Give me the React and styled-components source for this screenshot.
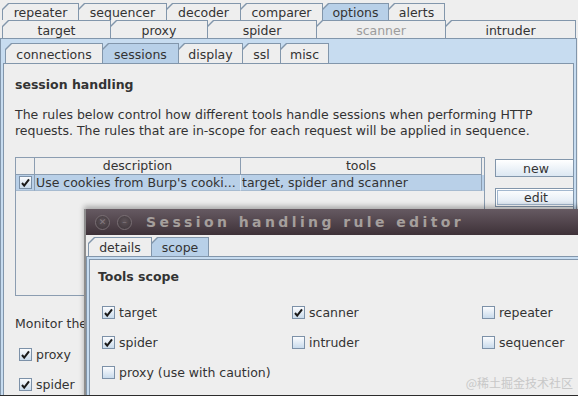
import styled, { createGlobalStyle } from "styled-components"

const GlobalStyle = createGlobalStyle`
  html, body {
    margin: 0;
    padding: 0;
    background: #eeeeee;
  }
  * {
    box-sizing: border-box;
  }
`

const Screen = styled.div`
  position: relative;
  width: 578px;
  height: 396px;
  overflow: hidden;
  background: #eeeeee;
  border-bottom: 1px solid #2c2c2c;
  font-family: "DejaVu Sans", "Noto Sans", sans-serif;
  font-size: 12.5px;
  color: #333333;
`

const TabRow = styled.div`
  display: flex;
  padding-left: ${(p) => p.$indent || 0}px;
  margin-top: ${(p) => p.$top || 0}px;
  height: ${(p) => p.$h}px;
`

const TabShape = styled.div`
  flex: none;
  width: ${(p) => p.$w}px;
  height: 100%;
  margin-right: -1px;
  padding: 1px 1px 0 1px;
  background: #8296ab;
  clip-path: polygon(6px 0, 100% 0, 100% 100%, 0 100%, 0 6px);
`

const TabFace = styled.div`
  height: 100%;
  display: flex;
  align-items: center;
  justify-content: center;
  padding-top: 1px;
  background: ${(p) => (p.$active ? "#b8d0e8" : "#eeeeee")};
  color: ${(p) => (p.$disabled ? "#9c9c9c" : "#333333")};
  clip-path: polygon(6px 0, 100% 0, 100% 100%, 0 100%, 0 6px);
  white-space: nowrap;
`

const Tab = ({ w, active, disabled, children }) => (
  <TabShape $w={w}>
    <TabFace $active={active} $disabled={disabled}>
      {children}
    </TabFace>
  </TabShape>
)

const OuterPane = styled.div`
  width: 577px;
  height: 370px;
  background: #c7dcf0;
  border: 1px solid #8296ab;
  border-bottom: none;
  padding: 4px 2px 0 2px;
`

const Panel = styled.div`
  height: 345px;
  background: #eeeeee;
  border: 1px solid #8296ab;
  padding: 0 0 0 11px;
  overflow: hidden;
`

const Heading = styled.div`
  margin-top: ${(p) => p.$top}px;
  font-weight: bold;
  line-height: 16px;
  color: #333333;
`

const Para = styled.p`
  margin: 14px 0 0;
  line-height: 16px;
  white-space: nowrap;
`

const TableRow = styled.div`
  display: flex;
  margin-top: 18px;
`

const ScrollPane = styled.div`
  width: 470px;
  height: 139px;
  border: 1px solid #8b9db1;
  flex: none;
`

const GridRow = styled.div`
  display: flex;
  height: ${(p) => p.$h}px;
  background: ${(p) => (p.$selected ? "#b9d0e8" : "#eeeeee")};
`

const HeadCell = styled.div`
  width: ${(p) => p.$w}px;
  border-right: 1px solid #8b9db1;
  border-bottom: 1px solid #8b9db1;
  display: flex;
  align-items: center;
  justify-content: center;
  line-height: 16px;
`

const BodyCell = styled.div`
  width: ${(p) => p.$w}px;
  border-right: 1px solid ${(p) => (p.$light ? "#dfe8f1" : "#8b9db1")};
  border-bottom: 1px solid #a7bbd0;
  display: flex;
  align-items: center;
  justify-content: ${(p) => (p.$center ? "center" : "flex-start")};
  padding-left: ${(p) => (p.$center ? 0 : 1)}px;
  white-space: nowrap;
  overflow: hidden;
`

const ButtonColumn = styled.div`
  display: flex;
  flex-direction: column;
  gap: 11px;
  margin-left: 10px;
  padding-top: 2px;
`

const Button = styled.div`
  width: 82px;
  height: ${(p) => (p.$focused ? 19 : 18)}px;
  display: flex;
  align-items: center;
  justify-content: center;
  border: 1px solid #8296ab;
  background: linear-gradient(#ffffff, #dce7f2);
  box-shadow: ${(p) => (p.$focused ? "inset 0 0 0 1px #ffffff, inset 0 0 0 2px #a3b8cf" : "none")};
  color: #333333;
`

const Text = styled.div`
  margin-top: ${(p) => p.$top}px;
  line-height: 16px;
`

const CheckRow = styled.div`
  display: flex;
  align-items: center;
  gap: 4px;
  height: 16px;
  margin-top: ${(p) => p.$top || 0}px;
  padding-left: ${(p) => p.$indent || 0}px;
  white-space: nowrap;
`

const Box = styled.span`
  flex: none;
  width: 13px;
  height: 13px;
  border: 1px solid #7c91a8;
  background: linear-gradient(#fbfcfe, #c9dbec);
  display: inline-flex;
  align-items: center;
  justify-content: center;
`

const CheckBox = ({ checked }) => (
  <Box>
    {checked && (
      <svg width="11" height="11" viewBox="0 0 11 11">
        <path d="M2 6 L4.2 8.6 L9 2.4" fill="none" stroke="#1a1a1a" strokeWidth="2" />
      </svg>
    )}
  </Box>
)

const Dialog = styled.div`
  position: absolute;
  left: 84px;
  top: 209px;
  width: 510px;
  height: 200px;
  background: #eeeeee;
  border-left: 2px solid #8e8e8e;
  box-shadow: 0 -3px 5px rgba(0, 0, 0, 0.28);
`

const TitleBar = styled.div`
  height: 26px;
  display: flex;
  align-items: center;
  padding-left: 9px;
  gap: 7px;
  background: linear-gradient(#665a62, #3e3138);
`

const WinButton = styled.span`
  width: 15px;
  height: 15px;
  border-radius: 50%;
  background: radial-gradient(circle at 50% 40%, #5e5459, #3b3237);
  border: 1px solid #786e73;
  display: inline-flex;
  align-items: center;
  justify-content: center;
  color: #847a80;
  font-size: 9px;
  line-height: 1;
`

const Title = styled.span`
  margin-left: 7px;
  font-weight: bold;
  font-size: 14px;
  letter-spacing: 3.4px;
  color: #a59f9c;
  white-space: nowrap;
`

const ScopePane = styled.div`
  height: 160px;
  border-top: 1px solid #8296ab;
  border-left: 1px solid #8296ab;
  background: #c7dcf0;
  padding: 2px 0 0 2px;
`

const ScopePanel = styled.div`
  height: 100%;
  background: #eeeeee;
  border-top: 1px solid #8296ab;
  border-left: 1px solid #8296ab;
  padding: 9px 0 0 8px;
`

const ScopeGrid = styled.div`
  display: grid;
  grid-template-columns: 190px 190px 120px;
  row-gap: 14px;
  margin-top: 19px;
  padding-left: 4px;
`

const Watermark = styled.div`
  position: absolute;
  right: 5px;
  bottom: 4px;
  font-family: "Noto Sans CJK SC", sans-serif;
  font-size: 12px;
  color: #c8c8c8;
  white-space: nowrap;
`

const scopeItems = [
  { label: "target", checked: true },
  { label: "scanner", checked: true },
  { label: "repeater", checked: false },
  { label: "spider", checked: true },
  { label: "intruder", checked: false },
  { label: "sequencer", checked: false },
  { label: "proxy (use with caution)", checked: false },
]

export default function App() {
  return (
    <Screen>
      <GlobalStyle />
      <TabRow $indent={2} $top={3} $h={17}>
        <Tab w={77}>repeater</Tab>
        <Tab w={89}>sequencer</Tab>
        <Tab w={75}>decoder</Tab>
        <Tab w={83}>comparer</Tab>
        <Tab w={67} active>options</Tab>
        <Tab w={57}>alerts</Tab>
      </TabRow>
      <TabRow $indent={2} $h={18}>
        <Tab w={109}>target</Tab>
        <Tab w={98}>proxy</Tab>
        <Tab w={110}>spider</Tab>
        <Tab w={130} disabled>scanner</Tab>
        <Tab w={131}>intruder</Tab>
      </TabRow>
      <OuterPane>
        <TabRow $indent={2} $h={20}>
          <Tab w={98}>connections</Tab>
          <Tab w={77} active>sessions</Tab>
          <Tab w={65}>display</Tab>
          <Tab w={39}>ssl</Tab>
          <Tab w={49}>misc</Tab>
        </TabRow>
        <Panel>
          <Heading $top={13}>session handling</Heading>
          <Para>
            The rules below control how different tools handle sessions when performing HTTP
            <br />
            requests. The rules that are in-scope for each request will be applied in sequence.
          </Para>
          <TableRow>
            <ScrollPane>
              <GridRow $h={17}>
                <HeadCell $w={19} />
                <HeadCell $w={206}>description</HeadCell>
                <HeadCell $w={241}>tools</HeadCell>
              </GridRow>
              <GridRow $h={16} $selected>
                <BodyCell $w={19} $center>
                  <CheckBox checked />
                </BodyCell>
                <BodyCell $w={206} $light>Use cookies from Burp's cooki...</BodyCell>
                <BodyCell $w={241}>target, spider and scanner</BodyCell>
              </GridRow>
            </ScrollPane>
            <ButtonColumn>
              <Button>new</Button>
              <Button $focused>edit</Button>
            </ButtonColumn>
          </TableRow>
          <Text $top={20}>Monitor the</Text>
          <CheckRow $top={14} $indent={4}>
            <CheckBox checked />
            proxy
          </CheckRow>
          <CheckRow $top={14} $indent={4}>
            <CheckBox checked />
            spider
          </CheckRow>
        </Panel>
      </OuterPane>

      <Dialog>
        <TitleBar>
          <WinButton>✕</WinButton>
          <WinButton>–</WinButton>
          <Title>Session handling rule editor</Title>
        </TitleBar>
        <TabRow $indent={2} $top={2} $h={19}>
          <Tab w={64}>details</Tab>
          <Tab w={58} active>scope</Tab>
        </TabRow>
        <ScopePane>
          <ScopePanel>
            <Heading $top={0}>Tools scope</Heading>
            <ScopeGrid>
              {scopeItems.map((item) => (
                <CheckRow key={item.label}>
                  <CheckBox checked={item.checked} />
                  {item.label}
                </CheckRow>
              ))}
            </ScopeGrid>
          </ScopePanel>
        </ScopePane>
      </Dialog>

      <Watermark>@稀土掘金技术社区</Watermark>
    </Screen>
  )
}
